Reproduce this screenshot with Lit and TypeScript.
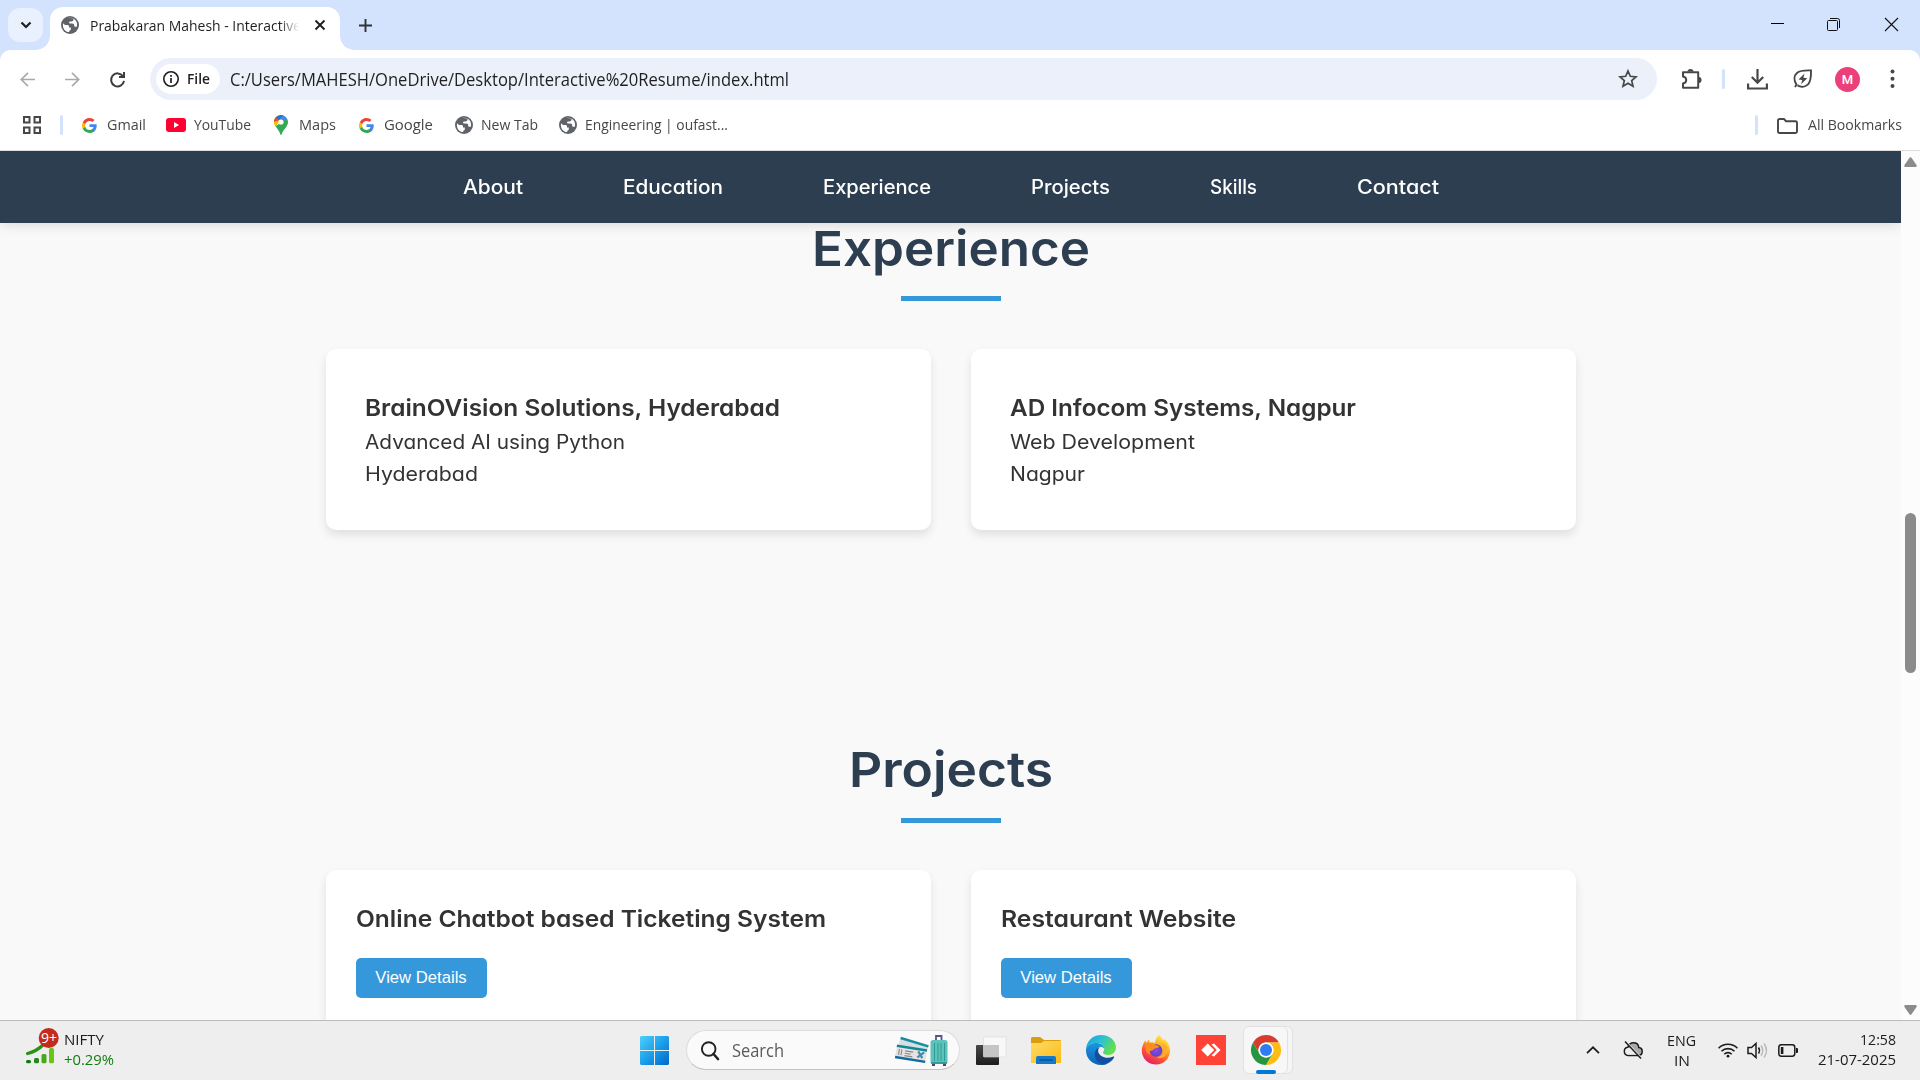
import { LitElement, html, css } from "lit";
import { customElement, property } from "lit/decorators.js";

/** One line of text, condensed or expanded to fill a given width. */
@customElement("fit-text")
class FitText extends LitElement {
  static styles = css`
    :host { display: block; flex: none; white-space: nowrap; }
    .run { display: inline-block; transform-origin: 0 50%; }
  `;
  @property({ type: Number }) w = 0;
  @property() text = "";
  render() {
    return html`<span class="run">${this.text}</span>`;
  }
  firstUpdated() {
    const run = this.renderRoot.querySelector(".run") as HTMLElement;
    const natural = run.getBoundingClientRect().width;
    this.style.width = `${this.w}px`;
    if (natural > 0) run.style.transform = `scaleX(${this.w / natural})`;
  }
}

const fit = (text: string, w: number, cls = "") =>
  html`<fit-text class=${cls} .text=${text} .w=${w}></fit-text>`;

const globe = html`<svg class="i18" viewBox="0 0 18 18">
  <circle cx="9" cy="9" r="9" fill="#5f6368" />
  <path d="M2 7.2c1 1.2 2.3 1.9 4 1.9 1.6 0 2 .7 2 1.7v.8h1.8v1.7c0 .7-.5 1.1-1.2 1.2l-.5 1.6C4.400 16 1.900 13 1.900 9z" fill="#fff" />
  <path d="M7.700 2.100c1.600-.4 3.600 0 4.900.9l-.3 1.300c-.2.9-1 1.100-1.800 1.100H9.300c-.8 0-1.200.5-1.200 1.200 0 .8.6 1 1.300 1h1.800c1.300 0 2 .8 2 1.800 0 .9.5 1.300 1.300 1.300h1.300c.6-1.900.3-4.200-.9-5.900C12.500 2 10.100 1.500 7.700 2.100z" fill="#fff" />
</svg>`;

const googleG = html`<svg class="i15" viewBox="1 1 22 22">
  <path d="M22.560 12.250c0-.78-.07-1.530-.2-2.250H12v4.260h5.920c-.26 1.370-1.040 2.530-2.210 3.310v2.770h3.570c2.080-1.920 3.280-4.740 3.280-8.090z" fill="#4285F4" />
  <path d="M12 23c2.970 0 5.460-.98 7.280-2.660l-3.570-2.770c-.98.66-2.230 1.060-3.710 1.060-2.860 0-5.290-1.930-6.160-4.530H2.180v2.840C3.990 20.530 7.700 23 12 23z" fill="#34A853" />
  <path d="M5.840 14.090c-.22-.66-.35-1.360-.35-2.090s.13-1.430.35-2.090V7.070H2.180C1.430 8.550 1 10.220 1 12s.43 3.450 1.180 4.930l2.850-2.220.81-.62z" fill="#FBBC05" />
  <path d="M12 5.380c1.620 0 3.060.56 4.210 1.640l3.150-3.150C17.450 2.090 14.970 1 12 1 7.700 1 3.990 3.470 2.180 7.070l3.660 2.840c.87-2.600 3.300-4.530 6.160-4.530z" fill="#EA4335" />
</svg>`;

@customElement("browser-chrome")
class BrowserChrome extends LitElement {
  static styles = css`
    :host { display: block; background: #d3e2fd; font: 15px/20px "Open Sans", sans-serif; color: #1f1f1f; }
    svg { display: block; flex: none; overflow: visible; }
    .i18 { width: 18px; height: 18px; }
    .i15 { width: 15px; height: 15px; }
    .strip { display: flex; height: 50px; padding: 0 22px 0 8px; box-sizing: border-box; }
    .tab-search { width: 35px; height: 34px; margin-top: 8px; border-radius: 12px; background: #e9f1fe; display: grid; place-items: center; }
    .tab { position: relative; display: flex; align-items: center; width: 290px; height: 43px; margin: 7px 0 0 7px; padding: 0 0 7px 11px; box-sizing: border-box; background: #fff; border-radius: 13px 13px 0 0; }
    .tab::before, .tab::after { content: ""; position: absolute; bottom: 0; width: 14px; height: 14px; }
    .tab::before { left: -14px; background: radial-gradient(circle at 0 0, transparent 13.500px, #fff 14px); }
    .tab::after { right: -14px; background: radial-gradient(circle at 100% 0, transparent 13.500px, #fff 14px); }
    .tab-title { width: 212px; margin: -1px 0 0 11px; mask-image: linear-gradient(90deg, #000 190px, transparent 209px); -webkit-mask-image: linear-gradient(90deg, #000 190px, transparent 209px); }
    .tab-close { margin-left: 13px; }
    .plus { margin: 19px 0 0 19px; }
    .wins { display: flex; margin-left: auto; gap: 43px; padding-top: 18px; }
    .close { margin-left: 2px; }
    .toolbar { display: flex; align-items: center; height: 58px; background: #fff; border-radius: 11px 11px 0 0; padding-left: 20px; }
    .gap30 { margin-left: 30px; }
    .omni { display: flex; align-items: center; box-sizing: border-box; width: 1507px; height: 42px; margin-left: 25px; padding: 0 19px 0 6px; border-radius: 21px; background: #ebf0fa; }
    .chip { display: flex; align-items: center; width: 64px; height: 30px; border-radius: 15px; background: #fff; padding-left: 7px; box-sizing: border-box; }
    .file { margin: -1px 0 0 8px; font-weight: 600; font-size: 14.500px; }
    .url { margin: 0 0 1px 10px; font-size: 17.500px; }
    .star { margin-left: auto; }
    .sep { width: 3px; height: 20px; border-radius: 1.500px; background: #d3e2fd; flex: none; }
    .puzzle { margin-left: 24px; }
    .sep-a { margin-left: 20px; }
    .down { margin-left: 22px; }
    .leaf { margin-left: 25px; }
    .avatar { width: 25px; height: 25px; margin-left: 22px; border-radius: 50%; background: #ec407a; color: #fff; font: 500 13px/25px Roboto, sans-serif; text-align: center; }
    .dots { margin-left: 30px; }
    .marks { display: flex; align-items: center; height: 34px; padding: 0 0 8px 23px; background: #fff; border-bottom: 1px solid #dcdfdc; color: #474747; }
    .marks fit-text { margin-top: -2px; }
    .marks .sep-b { margin: 0 19px 0 19px; }
    .t11 { margin-left: 10px; }
    .yt { margin-left: 20px; }
    .t8 { margin-left: 8px; }
    .pin { margin-left: 23px; }
    .t12 { margin-left: 11px; }
    .g2 { margin-left: 23px; }
    .w2 { margin-left: 21.500px; }
    .t9 { margin-left: 8px; }
    .all { margin-left: auto; display: flex; align-items: center; padding-right: 18px; }
    .folder { margin: 2px 10px 0 19px; }
  `;
  render() {
    return html`
      <div class="strip">
        <div class="tab-search">
          <svg width="12" height="8" viewBox="0 0 12 8"><path d="M1.500 1.500 6 6l4.500-4.500" fill="none" stroke="#1f1f1f" stroke-width="2.200" /></svg>
        </div>
        <div class="tab">
          ${globe}
          <div class="tab-title">${fit("Prabakaran Mahesh - Interactive", 211)}</div>
          <svg class="tab-close" width="10" height="10" viewBox="0 0 10 10"><path d="M.5.5l9 9M9.500.5l-9 9" stroke="#1f1f1f" stroke-width="1.900" /></svg>
        </div>
        <svg class="plus" width="13" height="13" viewBox="0 0 13 13"><path d="M6.500 0v13M0 6.500h13" stroke="#303236" stroke-width="1.900" /></svg>
        <div class="wins">
          <svg width="13" height="13" viewBox="0 0 13 13"><path d="M0 5.500h13" stroke="#000" /></svg>
          <svg width="13" height="13" viewBox="0 0 13 13" fill="none" stroke="#111"><rect x=".5" y="2.500" width="10" height="10" rx="1" /><path d="M3 .5h7.500a2 2 0 0 1 2 2V10" /></svg>
          <svg class="close" width="13" height="13" viewBox="0 0 13 13"><path d="M0 0l13 13M13 0L0 13" stroke="#111" stroke-width="1.100" /></svg>
        </div>
      </div>
      <div class="toolbar">
        <svg width="15" height="15" viewBox="0 0 15 15" fill="none" stroke="#a9aaac" stroke-width="1.700"><path d="M15 7.500H1.500M8 .8 1.300 7.500 8 14.200" /></svg>
        <svg class="gap30" width="15" height="15" viewBox="0 0 15 15" fill="none" stroke="#a9aaac" stroke-width="1.700"><path d="M0 7.500h13.500M7 .8l6.700 6.700L7 14.200" /></svg>
        <svg class="gap30" width="15" height="15" viewBox="0 0 15 15" fill="none" stroke="#3c3d3f" stroke-width="2"><path d="M13 4.300A6.500 6.500 0 1 0 14 8.800M14 0v5H9" /></svg>
        <div class="omni">
          <div class="chip">
            <svg width="16" height="16" viewBox="0 0 16 16"><circle cx="8" cy="8" r="7.200" fill="none" stroke="#1f1f1f" stroke-width="1.600" /><path d="M8 7v5M8 4v1.700" stroke="#1f1f1f" stroke-width="1.700" /></svg>
            ${fit("File", 23, "file")}
          </div>
          ${fit("C:/Users/MAHESH/OneDrive/Desktop/Interactive%20Resume/index.html", 559, "url")}
          <svg class="star" width="20" height="20" viewBox="0 0 20 20"><path d="M10 2l2.300 5.300 5.700.5-4.300 3.800 1.300 5.600-5-3-5 3 1.300-5.600L2 7.800l5.700-.5z" fill="none" stroke="#474747" stroke-width="1.700" /></svg>
        </div>
        <svg class="puzzle" width="21" height="21" viewBox="0 0 21 21"><path d="M2 3.200h15.200v15.600H2v-4.200q3.200-.6 3.200-3.500T2 7.600z" fill="none" stroke="#474747" stroke-width="2" stroke-linejoin="round" /><path d="M6.500 2.500a3 2.500 0 0 1 6 0zM18 8a2.500 3 0 0 1 0 6z" fill="#474747" /></svg>
        <div class="sep sep-a"></div>
        <svg class="down" width="21" height="21" viewBox="0 0 21 21" fill="none" stroke="#474747" stroke-width="2.200"><path d="M10.500 0v13M4.800 8l5.700 5.700L16.200 8M1.100 14.500v5h18.800v-5" /></svg>
        <svg class="leaf" width="20" height="20" viewBox="0 0 20 20"><path d="M2 18l1.500-2.500C.5 11 1 6.500 4 4 7.500 1 12 1.500 18 1.400c.2 6 .2 10.500-3 14-3 3-7.500 2.800-10.500 1" fill="none" stroke="#474747" stroke-width="1.900" /><path d="M11.500 4.500 5.500 10.600l3.800.5L8 15.300l6.300-6-3.900-.6z" fill="#474747" /></svg>
        <div class="avatar">M</div>
        <svg class="dots" width="5" height="20" viewBox="0 0 5 20" fill="#474747"><circle cx="2.500" cy="2.500" r="2" /><circle cx="2.500" cy="9.700" r="2" /><circle cx="2.500" cy="16.900" r="2" /></svg>
      </div>
      <div class="marks">
        <svg width="18" height="18" viewBox="0 0 18 18" fill="none" stroke="#474747" stroke-width="2"><path d="M1 1h5.500v5.500H1zM11.500 1H17v5.500h-5.500zM1 11.500h5.500V17H1zM11.500 11.500H17V17h-5.500z" /></svg>
        <div class="sep sep-b"></div>
        ${googleG}${fit("Gmail", 39, "t11")}
        <svg class="yt" width="20" height="14" viewBox="0 0 20 14"><rect width="20" height="14" rx="3" fill="#f03" /><path d="M8 4v6l5-3z" fill="#fff" /></svg>
        ${fit("YouTube", 57, "t8")}
        <svg class="pin" width="14" height="20" viewBox="0 0 14 20">
          <path d="M0 7a7 7 0 0 0 1.400 4.200L9.500 1.800 7 0C3 0 0 3 0 7z" fill="#fbbc04" />
          <path d="M7 0a7 7 0 0 0-5.500 2.600L5 5.600 9.500.5C8.700.1 7.900 0 7 0z" fill="#1a73e8" />
          <path d="M1.500 2.600A7 7 0 0 0 0 7l5-1.400z" fill="#ea4335" />
          <path d="M9.500.5 5 5.600l4.400 3.500L13 3.600A7 7 0 0 0 9.500.5z" fill="#4285f4" />
          <path d="M13 3.600 1.400 11.200C3.200 13.600 5.500 16 6.300 19.300c.2.900 1.200.9 1.400 0C9 14.500 14 12 14 7c0-1.200-.4-2.400-1-3.400z" fill="#34a853" />
          <path d="M0 7a7 7 0 0 0 1.400 4.200l4-4.600L5 5.600z" fill="#fbbc04" />
          <circle cx="7" cy="7" r="2.600" fill="#fff" />
        </svg>
        ${fit("Maps", 37, "t12")}
        <div class="g2">${googleG}</div>${fit("Google", 49, "t11")}
        <div class="w2">${globe}</div>${fit("New Tab", 57, "t9")}
        <div class="w2">${globe}</div>${fit("Engineering | oufast...", 143, "t9")}
        <div class="all">
          <div class="sep"></div>
          <svg class="folder" width="21" height="16" viewBox="0 0 21 16"><path d="M1 2.500Q1 1 2.500 1H7l2 2.200h9.500q1.500 0 1.500 1.500v8.800q0 1.500-1.500 1.500h-16Q1 15 1 13.500z" fill="none" stroke="#474747" stroke-width="1.900" /></svg>
          ${fit("All Bookmarks", 94)}
        </div>
      </div>
    `;
  }
}

@customElement("resume-page")
class ResumePage extends LitElement {
  static styles = css`
    :host { display: flex; height: 869px; overflow: hidden; font: 400 19.500px/32px Inter, sans-serif; color: #333; }
    fit-text { font-feature-settings: "cv11" 1; }
    .view { width: 1901px; height: 869px; overflow: hidden; background: #f9f9f9; }
    nav { position: relative; display: flex; justify-content: center; align-items: center; gap: 100px; height: 72px; background: #2c3e50; color: #fff; font-weight: 500; box-shadow: 0 2px 12px rgba(0, 0, 0, 0.13); }
    .head { display: flex; flex-direction: column; align-items: center; color: #2c3e50; font: 600 48.500px/51px Inter, sans-serif; }
    .rule { width: 100px; height: 5px; background: #3498db; margin: 22px 0 48px; }
    .projects .rule { margin: 23px 0 47px; }
    .projects { margin-top: 214px; }
    .cards { display: grid; grid-template-columns: 605px 605px; gap: 40px; justify-content: center; }
    .card { box-sizing: border-box; height: 181px; padding: 40px 39.500px; background: #fff; border-radius: 10px; box-shadow: 0 5px 10px rgba(0, 0, 0, 0.1); }
    .title { font-size: 23.300px; font-weight: 600; line-height: 37px; }
    .projects .card { padding: 30px; height: 240px; }
    .projects .title { margin-bottom: 21px; }
    button { display: flex; align-items: center; justify-content: center; width: 131px; height: 40px; padding: 0; border: 0; border-radius: 5px; background: #3498db; color: #fff; font: 16.670px/20px "Liberation Sans", sans-serif; }
    .bar { width: 19px; height: 869px; background: #fcfcfc; display: flex; flex-direction: column; align-items: center; justify-content: space-between; padding: 6px 0 5px; box-sizing: border-box; }
    .thumb { width: 11px; height: 160px; border-radius: 5.500px; background: #8b8b8b; margin-top: 14px; }
    .bar svg { display: block; }
  `;
  nav: [string, number][] = [["About", 60], ["Education", 100], ["Experience", 108], ["Projects", 79], ["Skills", 47], ["Contact", 82]];
  jobs: [string, number, string, number, string, number][] = [
    ["BrainOVision Solutions, Hyderabad", 415, "Advanced AI using Python", 260, "Hyderabad", 113],
    ["AD Infocom Systems, Nagpur", 346, "Web Development", 185, "Nagpur", 75],
  ];
  projects: [string, number][] = [["Online Chatbot based Ticketing System", 470], ["Restaurant Website", 235]];
  render() {
    return html`
      <div class="view">
        <nav>${this.nav.map(([t, w]) => fit(t, w))}</nav>
        <section>
          <div class="head">${fit("Experience", 278)}<div class="rule"></div></div>
          <div class="cards">
            ${this.jobs.map(([a, aw, b, bw, c, cw]) => html`<div class="card">${fit(a, aw, "title")}${fit(b, bw)}${fit(c, cw)}</div>`)}
          </div>
        </section>
        <section class="projects">
          <div class="head">${fit("Projects", 204)}<div class="rule"></div></div>
          <div class="cards">
            ${this.projects.map(([t, w]) => html`<div class="card">${fit(t, w, "title")}<button>View Details</button></div>`)}
          </div>
        </section>
      </div>
      <div class="bar">
        <svg width="13" height="10" viewBox="0 0 13 10"><path d="M5.500.8q1-1.200 2 0L12.500 8q.8 1.800-1 2h-10q-1.800-.2-1-2z" fill="#8b8b8b" /></svg>
        <div class="thumb"></div>
        <svg width="13" height="10" viewBox="0 0 13 10"><path d="M5.500 9.200q1 1.200 2 0L12.500 2q.8-1.800-1-2h-10q-1.800.2-1 2z" fill="#8b8b8b" /></svg>
      </div>
    `;
  }
}

@customElement("task-bar")
class TaskBar extends LitElement {
  static styles = css`
    :host { display: flex; align-items: center; box-sizing: border-box; height: 60px; border-top: 1px solid #bcbcbc; background: #eeeeee; font: 15px/20px "Open Sans", sans-serif; color: #1c1c1c; padding: 0 0 1px 26px; }
    svg { display: block; flex: none; overflow: visible; }
    .stock { margin-bottom: 11px; }
    .two { margin: 0 0 3px 10px; }
    .up { color: #107c10; }
    .badge { font: 14px "Open Sans", sans-serif; fill: #fff; }
    .win { margin-left: 526px; }
    .search { display: flex; align-items: center; box-sizing: border-box; width: 274px; height: 40px; margin-left: 17px; padding: 0 11px 0 14px; border-radius: 20px; background: #fafafa; border: 1px solid #dcdcdc; border-bottom-color: #c4c4c4; color: #5a5a5a; font-size: 17.500px; }
    .stext { margin-left: 13px; }
    .trip { margin-left: auto; }
    .view { margin: 1px 0 0 16px; }
    .app { margin-left: 25px; }
    .active { display: flex; justify-content: center; position: relative; box-sizing: border-box; width: 45px; height: 48px; margin-left: 17px; padding-top: 8px; border-radius: 6px; background: #f7f7f7; border: 1px solid #e2e2e2; box-shadow: 5px 0 0 -1px #f5f5f5, 5px 0 0 0 #e2e2e2; }
    .active::after { content: ""; position: absolute; left: 12px; bottom: -1px; width: 20px; height: 4px; border-radius: 2px; background: #0078d4; }
    .tray { display: flex; align-items: center; margin-left: auto; padding-right: 24px; }
    .cloud { margin-left: 23px; }
    .lang { display: flex; flex-direction: column; align-items: center; margin: 0 0 1px 24px; }
    .wifi { margin-left: 22px; }
    .snd { margin-left: 9px; }
    .bat { margin-left: 10px; }
    .clock { display: flex; flex-direction: column; align-items: flex-end; margin: 0 0 3px 20px; }
  `;
  render() {
    return html`
      <svg class="stock" width="28" height="36" viewBox="0 0 28 36">
        <path d="M1.500 26.500C8 25 13 22 18 17" fill="none" stroke="#2b9016" stroke-width="3.200" stroke-linecap="round" />
        <rect y="33" width="5" height="3.200" rx="1.500" fill="#0f7a12" /><rect x="8" y="31" width="5" height="5.200" rx="1.500" fill="#23891a" /><rect x="15.500" y="27" width="5" height="9.200" rx="1.500" fill="#46a915" /><rect x="23" y="21" width="5" height="15.200" rx="1.500" fill="#6cc512" />
        <circle cx="22.700" cy="11" r="10" fill="#c42b1c" />
        <text class="badge" x="14.900" y="16" textLength="16">9+</text>
      </svg>
      <div class="two">${fit("NIFTY", 40)}${fit("+0.29%", 50, "up")}</div>
      <svg class="win" width="29" height="29" viewBox="0 0 29 29">
        <defs><linearGradient id="wl" x1="0" y1="0" x2="29" y2="29" gradientUnits="userSpaceOnUse"><stop offset="0" stop-color="#4fd0fb" /><stop offset=".5" stop-color="#1ba0ea" /><stop offset="1" stop-color="#0067c8" /></linearGradient></defs>
        <path d="M1 0h13v14H0V1zM15 0h13l1 1v13H15zM0 15h14v14H1l-1-1zM15 15h14v13l-1 1H15z" fill="url(#wl)" />
      </svg>
      <div class="search">
        <svg width="18" height="19" viewBox="0 0 18 19" fill="none" stroke="#222"><circle cx="7.700" cy="8" r="6.800" stroke-width="1.900" /><path d="M12.500 13l4.500 5" stroke-width="2.600" stroke-linecap="round" /></svg>
        ${fit("Search", 52, "stext")}
        <svg class="trip" width="53" height="31" viewBox="0 0 53 31">
          <g transform="rotate(17 5 5)"><rect x="5" y="1.500" width="29" height="12" fill="#d8dfe4" /><rect x="5" y="1.500" width="29" height="2.600" fill="#13919b" /></g>
          <g transform="rotate(9 2 10)"><rect x="2" y="10" width="30.500" height="13" fill="#e6e3e1" /><rect x="2" y="9.500" width="30.500" height="2.600" fill="#128893" /><rect x="2" y="21" width="30.500" height="2.400" fill="#0f6c9d" />
          <path d="M5 13.500v6M7.500 13.500v6M11 14.500h8M11 17h6M11 19.300h8" stroke="#8a868f" stroke-width="1.100" /><path d="M24 13l5 6M30 13l-6 6" stroke="#3d8db6" stroke-width="2.200" /></g>
          <path d="M41 6V1h5.500v5" fill="none" stroke="#58528a" stroke-width="1.800" />
          <rect x="35.500" y="5" width="17" height="24" rx="2.500" fill="#5cc3ba" /><path d="M39.500 8v18M43 8v18M46 8v18M49.500 8v18" stroke="#329b95" stroke-width="1" /><path d="M36 28h16" stroke="#2a8d88" stroke-width="1.500" />
          <rect x="37" y="29" width="3" height="2" fill="#4a4668" /><rect x="48" y="29" width="3" height="2" fill="#4a4668" />
        </svg>
      </div>
      <svg class="view" width="30" height="28" viewBox="0 0 30 28">
        <defs><linearGradient id="tv" x1="0" y1="0" x2="0" y2="1"><stop offset="0" stop-color="#484848" /><stop offset="1" stop-color="#1d1d1d" /></linearGradient></defs>
        <rect y="8" width="23" height="20" rx="1" fill="url(#tv)" /><rect x="7.500" y="0" width="22.500" height="20" rx="1" fill="#f8f8f8" stroke="#d8d8d8" stroke-width=".6" /><path d="M7.500 8H23v12H7.500z" fill="#c5c5c5" />
      </svg>
      <svg class="app" width="30" height="27" viewBox="0 0 30 27">
        <defs><linearGradient id="fo" x1="0" y1="0" x2="1" y2="1"><stop offset="0" stop-color="#ffdc66" /><stop offset="1" stop-color="#fbb918" /></linearGradient></defs>
        <path d="M0 1.500Q0 0 1.500 0H9l4 3h15.500Q30 3 30 4v4H0z" fill="#dc9c0c" /><path d="M0 6h10l3-2h17v22H0z" fill="url(#fo)" /><path d="M5 27v-6q0-2 2-2h16q2 0 2 2v6z" fill="#1379cc" /><path d="M8.500 23h13" stroke="#0b4a86" stroke-width="1.300" />
      </svg>
      <svg class="app" width="30" height="30" viewBox="0 0 30 30">
        <defs>
          <linearGradient id="e1" x1="0" y1="0" x2="1" y2=".5"><stop offset="0" stop-color="#1ca0e0" /><stop offset=".5" stop-color="#2bbfd4" /><stop offset="1" stop-color="#66e04c" /></linearGradient>
          <linearGradient id="e2" x1="0" y1="0" x2="0" y2="1"><stop offset="0" stop-color="#1c96de" /><stop offset="1" stop-color="#0c62b8" /></linearGradient>
        </defs>
        <path d="M0 14C.5 6 7 0 15 0c9 0 15 6 15 12.500 0 4.500-3.500 7.500-7.500 7.500-3.500 0-5.500-1.200-5.500-2.400 0-1 1.300-1.500 1.300-3.800C18.300 10 14.500 8 10.500 8 5 8 1.500 11 0 14z" fill="url(#e1)" />
        <path d="M0 14c1.500-3.500 5-6 10.500-6 4 0 7.800 2.300 7.800 5.800-.8-1.300-2-2-3.500-2-3 0-4.500 2.600-4.500 5.700 0 5.500 4 11.500 10.500 11.500-2 .8-4 1-5.800 1C6.500 30 0 23.500 0 15.500z" fill="url(#e2)" />
        <path d="M14.500 12c-3.500.3-5.700 3.500-5.700 7.500 0 5 3.700 9.500 9.700 10 4.500-1 8-3.700 9.700-7.300.3-.7-.3-1-1-.6-6.700 3.200-13.900-.2-15-4.800-.4-2 .4-4 2.300-4.800z" fill="#134f9e" />
      </svg>
      <svg class="app" width="30" height="30" viewBox="0 0 30 30">
        <defs>
          <linearGradient id="f1" x1=".8" y1="0" x2=".25" y2="1"><stop offset="0" stop-color="#fff04a" /><stop offset=".35" stop-color="#ffb326" /><stop offset=".65" stop-color="#ff5b30" /><stop offset="1" stop-color="#e21375" /></linearGradient>
          <radialGradient id="f2"><stop offset="0" stop-color="#8c4af2" /><stop offset="1" stop-color="#5a43c6" /></radialGradient>
        </defs>
        <path d="M18 0c2 1.500 3.500 4 4.500 6 .5-.8.400-2 .4-2.500C27 7 29 11 29 15.500 29 23.500 22.800 29.500 15 29.500S.8 23.500.8 15.500C.8 12 2.300 8 4.500 5.200L5 8l3-3.500.8 3.200c2-.6 4-.6 5 .2C14 5 16 2 18 0z" fill="url(#f1)" />
        <circle cx="15" cy="15.500" r="6.200" fill="url(#f2)" />
        <path d="M5 9c4-2 8-1 10 1.300 2 .2 3 .7 3.300 1.400-1 1.500-3 1.500-4.500 1.800-1.600.5-1.600 2.300-3.300 2.300-2 0-2.500 2-1 4-4-1-6.500-6-4.500-10.800z" fill="#ff8a1e" />
        <path d="M17.500 8c4.500.5 6 5 5 9-.8 3-3.500 5-7 5 4 2.500 10 0 11-6 .8-5-3-8-9-8z" fill="#ffae2b" />
      </svg>
      <svg class="app" width="30" height="30" viewBox="0 0 30 30"><rect width="30" height="30" fill="#ff4336" /><path d="M5.200 15l6.500-6.500 6.500 6.500-6.500 6.500z" fill="#fff" /><path d="M15.500 9.500 18 8.500l6.500 6.500-6.500 6.500-2.500-1 5.300-5.500z" fill="#fff" /></svg>
      <div class="active">
        <svg width="30" height="30" viewBox="0 0 48 48">
          <path d="M24 0A24 24 0 0 0 3.215 12L13.600 30A12 12 0 0 1 24 12h20.785A24 24 0 0 0 24 0z" fill="#da3b2f" />
          <path d="M44.785 12A24 24 0 0 1 24 48l10.400-18A12 12 0 0 0 24 12z" fill="#fdbd12" />
          <path d="M24 48A24 24 0 0 1 3.215 12L13.600 30a12 12 0 0 0 20.800 0z" fill="#25953f" />
          <circle cx="24" cy="24" r="12" fill="#fff" /><circle cx="24" cy="24" r="9.600" fill="#2f7cf0" />
        </svg>
      </div>
      <div class="tray">
        <svg width="14" height="8" viewBox="0 0 14 8"><path d="M1 7.200 7 1.300l6 5.900" fill="none" stroke="#1c1c1c" stroke-width="1.700" /></svg>
        <svg class="cloud" width="20" height="18" viewBox="0 0 20 18"><path d="M5 14.500a4.200 4.200 0 0 1-.2-8.300C6 3 8 1.800 10.500 1.800c3 0 5 2 5.300 4.700 4.500.3 4.700 7.800-.3 8z" fill="#a9a9a9" stroke="#1c1c1c" stroke-width="1.500" /><path d="M5 13.700a3.400 3.400 0 0 1 0-6.700h3l6.500 6.700z" fill="#ededed" /><path d="M3 .5 19 17.500" stroke="#eee" stroke-width="1.500" /><path d="M2 .5 18 17.500" stroke="#1c1c1c" stroke-width="1.500" /></svg>
        <div class="lang">${fit("ENG", 29)}${fit("IN", 16)}</div>
        <svg class="wifi" width="20" height="16" viewBox="0 0 20 16" fill="none" stroke="#1c1c1c" stroke-width="1.600"><path d="M.6 6.200a13.300 13.300 0 0 1 18.800 0M3.500 9.300a9.200 9.200 0 0 1 13 0M6.300 12.200a5.200 5.200 0 0 1 7.400 0" /><circle cx="10" cy="14.200" r="1.400" fill="#1c1c1c" stroke="none" /></svg>
        <svg class="snd" width="21" height="17" viewBox="0 0 21 17" fill="none" stroke="#1c1c1c" stroke-width="1.500"><path d="M1 5.500h3.500L9 1.500v14l-4.500-4H1z" /><path d="M11.500 5.500q2 3 0 6" /><path d="M14 3.500q3.500 5 0 10M17 1.500q5 7 0 14" stroke="#b9b9b9" /></svg>
        <svg class="bat" width="20" height="13" viewBox="0 0 20 13"><rect x=".8" y=".8" width="16" height="11.400" rx="2.600" fill="none" stroke="#1c1c1c" stroke-width="1.500" /><rect x="2.800" y="3" width="2.600" height="7" fill="#1c1c1c" /><path d="M18 4h1q1 0 1 1v3q0 1-1 1h-1z" fill="#1c1c1c" /></svg>
        <div class="clock">${fit("12:58", 36)}${fit("21-07-2025", 78)}</div>
      </div>
    `;
  }
}

@customElement("app-root")
class AppRoot extends LitElement {
  static styles = css`
    :host { display: flex; flex-direction: column; width: 1920px; height: 1080px; overflow: hidden; }
  `;
  render() {
    return html`<browser-chrome></browser-chrome><resume-page></resume-page><task-bar></task-bar>`;
  }
}
